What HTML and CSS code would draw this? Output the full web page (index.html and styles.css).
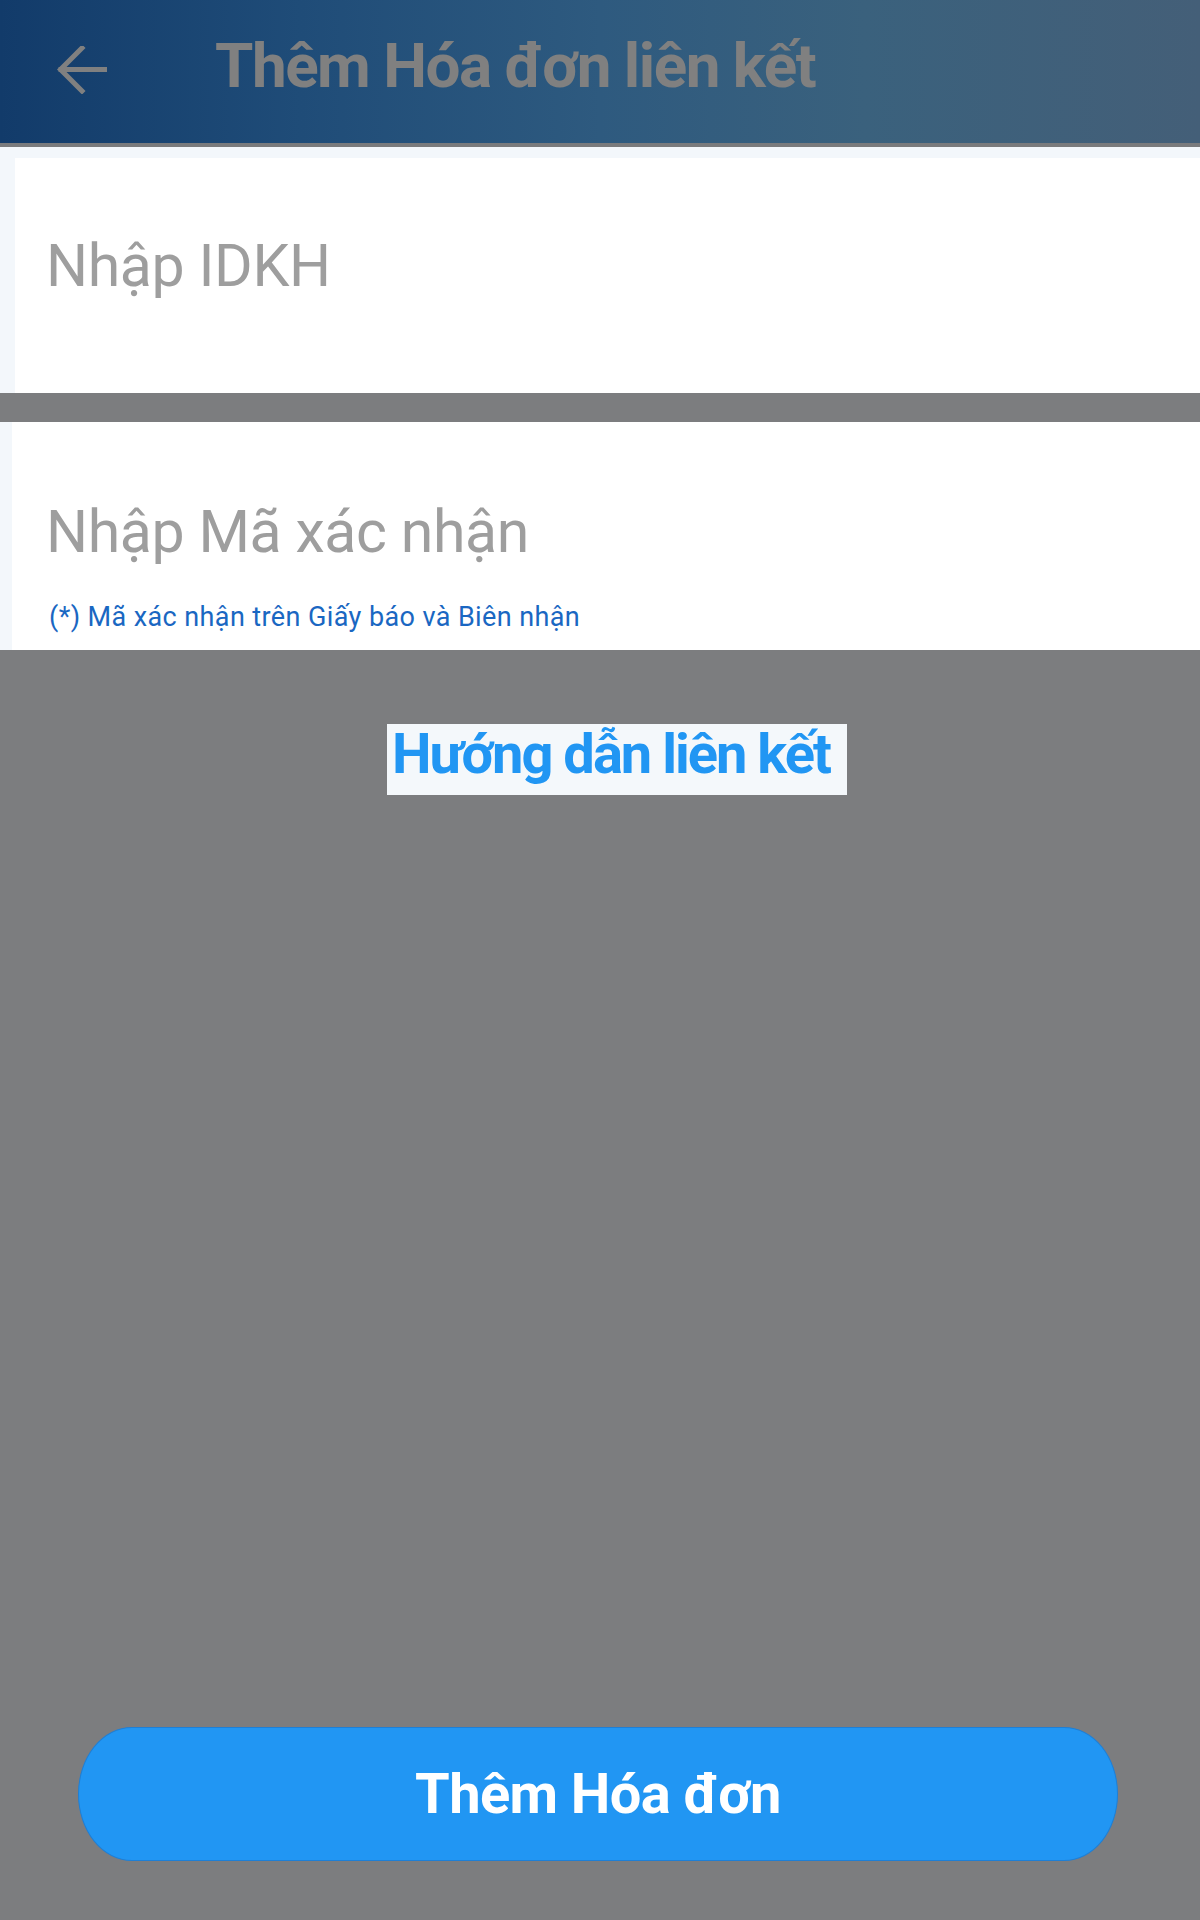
FILE: index.html
```html
<!DOCTYPE html>
<html lang="vi">
<head>
<meta charset="utf-8">
<title>Thêm Hóa đơn liên kết</title>
<link rel="stylesheet" href="styles.css">
</head>
<body>
<div class="page">
  <header class="topbar">
    <svg class="back" width="50" height="48" viewBox="0 0 50 48" aria-hidden="true">
      <path d="M48 23.5H4 M25 2L3.5 23.5L25 45" fill="none" stroke="#808080" stroke-width="5" stroke-linecap="square" stroke-linejoin="miter"/>
    </svg>
    <h1 class="title">Thêm Hóa đơn liên kết</h1>
  </header>
  <div class="divider"></div>
  <section class="field field-first">
    <div class="field-box box-first">
      <div class="placeholder">Nhập IDKH</div>
    </div>
  </section>
  <section class="field field-second">
    <div class="field-box box-second">
      <div class="placeholder">Nhập Mã xác nhận</div>
      <div class="hint">(*) Mã xác nhận trên Giấy báo và Biên nhận</div>
    </div>
  </section>
  <div class="guide-row">
    <a class="guide">Hướng dẫn liên kết</a>
  </div>
  <div class="spacer"></div>
  <div class="btn-row">
    <button class="btn">Thêm Hóa đơn</button>
  </div>
</div>
</body>
</html>
```
FILE: styles.css
```css
* { box-sizing: border-box; }
html, body { margin: 0; padding: 0; }
body {
  background: #7c7d7f;
  font-family: Roboto, "Noto Sans", sans-serif;
}
.page {
  width: 1200px;
  height: 1920px;
  display: flex;
  flex-direction: column;
  background: #7c7d7f;
}
.topbar {
  height: 143px;
  flex: none;
  display: flex;
  align-items: flex-start;
  background: linear-gradient(90deg, #123b6a 0%, #1f4c78 25%, #2e5a7f 50%, #3a617d 72%, #445f78 100%);
}
.back {
  margin-top: 46px;
  margin-left: 57px;
  flex: none;
}
.title {
  margin: 35px 0 0 108px;
  font-family: Roboto, sans-serif;
  font-weight: 700;
  font-size: 62px;
  line-height: 62px;
  letter-spacing: -1.5px;
  color: #808080;
}
.divider {
  height: 4px;
  flex: none;
  background: #7a7b7d;
}
.field {
  flex: none;
  background: #f3f7fb;
}
.field-first {
  padding: 11px 0 0 15px;
}
.field-second {
  margin-top: 29px;
  padding: 0 0 0 12px;
}
.field-box {
  background: #ffffff;
}
.box-first {
  height: 235px;
  padding: 78px 0 0 31px;
}
.box-second {
  height: 228px;
  padding: 80px 0 0 34px;
}
.placeholder {
  font-family: Roboto, sans-serif;
  font-size: 59px;
  line-height: 59px;
  letter-spacing: -0.4px;
  color: #9e9e9e;
  white-space: nowrap;
}
.hint {
  margin-top: 43px;
  margin-left: 3px;
  font-family: Roboto, sans-serif;
  font-size: 27px;
  line-height: 27px;
  letter-spacing: 0.4px;
  color: #1a67c2;
  white-space: nowrap;
}
.guide-row {
  flex: none;
  display: flex;
  padding: 74px 0 0 387px;
}
.guide {
  display: block;
  height: 71px;
  padding: 0 17px 0 5px;
  background: #f4f8fb;
  font-family: Roboto, sans-serif;
  font-weight: 700;
  font-size: 56px;
  line-height: 60px;
  letter-spacing: -2px;
  color: #2196f3;
  white-space: nowrap;
}
.spacer { flex: 1; }
.btn-row {
  flex: none;
  display: flex;
  padding: 0 82px 59px 78px;
}
.btn {
  flex: 1;
  height: 134px;
  border: 1px solid #1e7fd6;
  border-radius: 54px / 67px;
  background: #2196f3;
  color: #ffffff;
  font-family: Roboto, sans-serif;
  font-weight: 700;
  font-size: 56px;
  letter-spacing: -0.6px;
  display: flex;
  align-items: center;
  justify-content: center;
  padding: 0;
}
```
